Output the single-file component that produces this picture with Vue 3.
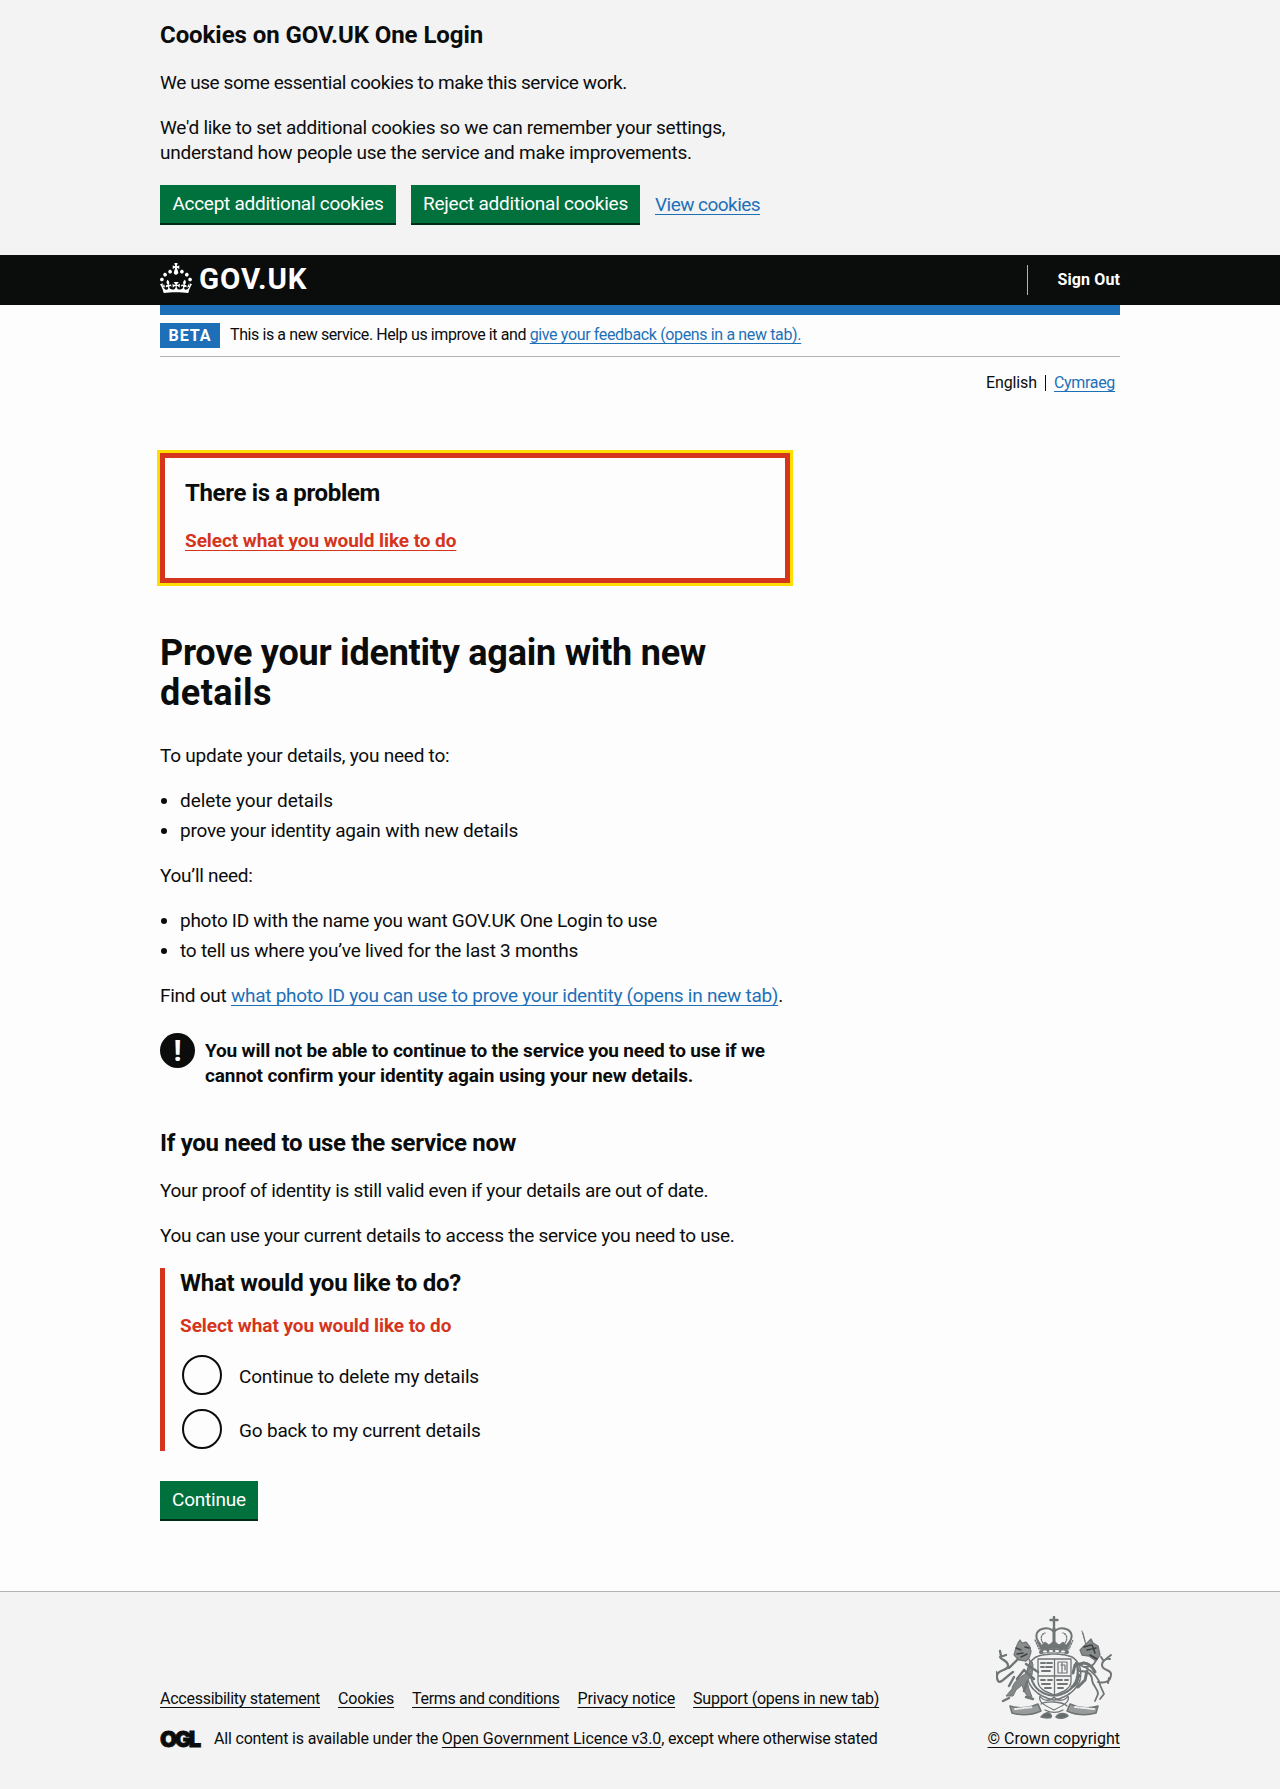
<script setup>
import { ref } from 'vue'

const choice = ref('')

const footerLinks = [
  { text: 'Accessibility statement', cls: 'k26' },
  { text: 'Cookies', cls: 'k20' },
  { text: 'Terms and conditions', cls: 'k33' },
  { text: 'Privacy notice', cls: 'k15' },
  { text: 'Support (opens in new tab)', cls: 'k23' }
]

const options = [
  { value: 'delete', text: 'Continue to delete my details' },
  { value: 'back', text: 'Go back to my current details' }
]
</script>

<template>
  <div class="page">
    <section class="cookies">
      <div class="container">
        <h2 class="heading-m k07">Cookies on GOV.UK One Login</h2>
        <p class="body k40">We use some essential cookies to make this service work.</p>
        <p class="body k27">We'd like to set additional cookies so we can remember your settings,<br>understand how people use the service and make improvements.</p>
        <div class="cookie-actions">
          <button class="button accept k27">Accept additional cookies</button>
          <button class="button reject k25">Reject additional cookies</button>
          <a class="link view k54" href="#">View cookies</a>
        </div>
      </div>
    </section>

    <header class="header">
      <div class="container header-row">
        <a class="brand" href="#">
          <svg class="crown" viewBox="0 0 32 30" width="32" height="30" fill="#fff" aria-hidden="true">
            <path d="M22.6 10.4c-1 .4-2-.1-2.4-1-.4-.9.1-2 1-2.4.9-.4 2 .1 2.4 1s-.1 2-1 2.4m4.9 3c-1 .4-2-.1-2.4-1-.4-.9.1-2 1-2.4.9-.4 2 .1 2.4 1s0 2-1 2.4m3.3 4.8c-1 .4-2-.1-2.4-1-.4-.9.1-2 1-2.4.9-.4 2 .1 2.4 1s-.1 2-1 2.4M17 4.7l2.3 1.2V2.5l-2.3.7-.2-.2.9-3h-3.4l.9 3-.2.2c-.1.1-2.3-.7-2.3-.7v3.4L15 4.7c.1.1.1.2.2.2l-1.3 4c-.1.2-.1.4-.1.6 0 1.1.8 2 1.9 2.2h.7c1-.2 1.9-1.1 1.9-2.1 0-.2 0-.4-.1-.6l-1.3-4c-.1-.2 0-.2.1-.3m-7.6 5.7c.9.4 2-.1 2.4-1 .4-.9-.1-2-1-2.4-.9-.4-2 .1-2.4 1s0 2 1 2.4m-5 3c.9.4 2-.1 2.4-1 .4-.9-.1-2-1-2.4-.9-.4-2 .1-2.4 1s.1 2 1 2.4m-3.2 4.8c.9.4 2-.1 2.4-1 .4-.9-.1-2-1-2.4-.9-.4-2 .1-2.4 1s0 2 1 2.4m14.8 11c4.4 0 8.6.3 12.3.8 1.1-4.5 2.4-7 3.7-8.8l-2.5-.9c.2 1.3.3 1.9 0 2.7-.4-.4-.8-1.1-1.1-2.3l-1.2 4c.7-.5 1.3-.8 2-.9-1.1 2.5-2.6 3.1-3.5 3-1.1-.2-1.7-1.2-1.5-2.1.3-1.2 1.5-1.5 2.1-.1 1.1-2.3-.8-3-2-2.3 1.9-1.9 2.1-3.5.6-5.6-2.1 1.6-2.1 3.2-1.2 5.5-1.2-1.4-3.2-.6-2.5 1.6.9-1.4 2.1-.5 1.9.8-.2 1.1-1.7 2.1-3.5 1.9-2.7-.2-2.9-2.1-2.9-3.6.7-.1 1.9.5 2.9 1.9l.4-4.3c-1.1 1.1-2.1 1.4-3.2 1.4.4-1.2 2.1-3 2.1-3h-5.4s1.7 1.9 2.1 3c-1.1 0-2.1-.2-3.2-1.4l.4 4.3c1-1.4 2.2-2 2.9-1.9-.1 1.5-.2 3.4-2.9 3.6-1.9.2-3.4-.8-3.5-1.9-.2-1.3 1-2.2 1.9-.8.7-2.3-1.2-3-2.5-1.6.9-2.2.9-3.9-1.2-5.5-1.5 2-1.3 3.7.6 5.6-1.2-.7-3.1 0-2 2.3.6-1.4 1.8-1.1 2.1.1.2.9-.3 1.9-1.5 2.1-.9.2-2.4-.5-3.5-3 .6 0 1.2.3 2 .9l-1.2-4c-.3 1.1-.7 1.9-1.1 2.3-.3-.8-.2-1.4 0-2.7L0 21.2C1.3 23 2.6 25.5 3.7 30c3.7-.5 7.9-.8 12.3-.8" />
          </svg>
          <span class="brand-name">GOV.UK</span>
        </a>
        <nav class="account"><a href="#">Sign Out</a></nav>
      </div>
    </header>

    <div class="container">
      <div class="accent"></div>
      <div class="phase">
        <strong class="tag">BETA</strong>
        <span class="k40">This is a new service. Help us improve it and <a class="link k36" href="#">give your feedback (opens in a new tab).</a></span>
      </div>
      <nav class="languages">
        <span class="current">English</span>
        <a class="link k33" href="#">Cymraeg</a>
      </nav>

      <main class="main">
        <section class="error-summary">
          <h2 class="heading-m k35">There is a problem</h2>
          <a class="error-link k07" href="#">Select what you would like to do</a>
        </section>

        <h1 class="heading-l"><span class="k24">Prove your identity again with new</span><br><span class="wide">details</span></h1>

        <p class="body k23">To update your details, you need to:</p>
        <ul class="list">
          <li class="k07">delete your details</li>
          <li class="k21">prove your identity again with new details</li>
        </ul>
        <p class="body k30">You’ll need:</p>
        <ul class="list">
          <li class="k28">photo ID with the name you want GOV.UK One Login to use</li>
          <li class="k23">to tell us where you’ve lived for the last 3 months</li>
        </ul>
        <p class="body k26">Find out <a class="link" href="#">what photo ID you can use to prove your identity (opens in new tab)</a>.</p>

        <div class="warning">
          <span class="warning-icon" aria-hidden="true">!</span>
          <strong><span class="k16">You will not be able to continue to the service you need to use if we</span><br><span class="k10">cannot confirm your identity again using your new details.</span></strong>
        </div>

        <h2 class="heading-m k31">If you need to use the service now</h2>
        <p class="body k30">Your proof of identity is still valid even if your details are out of date.</p>
        <p class="body k29">You can use your current details to access the service you need to use.</p>

        <form @submit.prevent>
          <fieldset class="group">
            <h2 class="legend k24">What would you like to do?</h2>
            <p class="error-message k07">Select what you would like to do</p>
            <label v-for="o in options" :key="o.value" class="option">
              <input v-model="choice" type="radio" name="choice" :value="o.value">
              <span class="k18">{{ o.text }}</span>
            </label>
          </fieldset>
          <button class="button continue k20">Continue</button>
        </form>
      </main>
    </div>

    <footer class="footer">
      <div class="container footer-row">
        <div>
          <ul class="footer-links">
            <li v-for="l in footerLinks" :key="l.text"><a :class="['footer-link', l.cls]" href="#">{{ l.text }}</a></li>
          </ul>
          <div class="licence">
            <span class="ogl">OGL</span>
            <span class="k19">All content is available under the <a class="footer-link k06" href="#">Open Government Licence v3.0</a><span class="k26">, except where otherwise stated</span></span>
          </div>
        </div>
        <div class="copyright">
          <svg class="crest" viewBox="0 0 116 103" width="116" height="103" fill="none" stroke="#6f7475" stroke-width="1.3" stroke-linecap="round" stroke-linejoin="round" aria-hidden="true">
            <!-- crown -->
            <path d="M58 1v9M54.500 4h7" stroke-width="2.400" />
            <path d="M44 28c-6-7-4-13 2-15 5-2 10 0 12 3 2-3 7-5 12-3 6 2 8 8 2 15" stroke-width="2" />
            <path d="M58 12v17" stroke-width="3" />
            <path d="M47 27c-3-4-2-9 2-10M69 27c3-4 2-9-2-10M39 24l4 9c10-3 20-3 30 0l4-9" stroke-dasharray="1.500 1.500" />
            <path d="M41 26l4 8c9-2 17-2 26 0l4-8-5 3-3-3-4 3-5-4-5 4-4-3-3 3z" fill="#6f7475" stroke-width=".8" />
            <path d="M45 36c9-2 17-2 26 0" stroke-width="4" />
            <path d="M48 35.500h2M54 35h2M60 35h2M66 35.500h2" stroke="#f3f3f3" stroke-width="2" />
            <!-- garter and quartered shield -->
            <path d="M40 41c-8 5-10 14-8 23 3 10 14 18 26 20 12-2 23-10 26-20 2-9 0-18-8-23-10-4-26-4-36 0z" stroke-dasharray="3 1.200" stroke-width="1.600" />
            <path d="M36 47c-4 8-1 22 8 28 9 6 19 6 28 0 9-6 12-20 8-28" stroke-dasharray="2 1.500" stroke-width="2.200" />
            <path d="M42 43h33v22c0 8-8 11-16.500 14C50 76 42 73 42 65zM58.500 43v35M42 60h33" />
            <path d="M45 47h4m2 0h5M45 51h3m2 0h6M46 55h8M45 64h4m3 0h4M46 68h8M49 72h6M61 64h5m3 0h3M62 68h9M62 72h5" stroke-width="1.900" />
            <path d="M62 46h9v11h-9zM65 49h4v5M66 47v9" stroke-width="1.200" />
            <!-- lion -->
            <path d="M22 27l2-3 2 3 4-1 4 5 1 5-2 6-3 3-7-1-5-5 2-7z" fill="#8b8f90" stroke-dasharray="2 1" />
            <path d="M20 32l5 2m-4 4l6-1m2-6l4 1M25 41l6-3" stroke="#3f4344" stroke-width="1.500" />
            <path d="M33 43c2 8 0 13-7 17-5 4-9 7-10 13l-6 7h7l3-6 6-5 2 6 4 6h4l-3-8-2-8 5-6 1-10z" fill="#85898a" stroke-width="1" />
            <path d="M30 48l12 8m-14-2l10 9M22 43l-9 9m5 9l-5 9m15-16l-7 9m10 3l-3 9M13 82l-6 3M30 81l7 2" stroke-width="2.400" />
            <path d="M17 56C8 62 3 71 1 62s13-7 11-13C11 44 5 44 4 41m0 0l6-2m-5 1l-1-5M1 62l-1-6" stroke-width="2.300" />
            <!-- unicorn -->
            <path d="M90 29L86 15M87 17l2 8" stroke-width="1" />
            <path d="M84 34l6-6 5-5 2 4 5 3 2 9-4 6-7-5-7-1z" fill="#858a8b" />
            <path d="M88 31l7-2m-4 5l9-2m-4-3l3 8m-5 2l7 4" stroke="#3d4142" stroke-width="1.600" />
            <path d="M100 44c-2 6-6 7-12 7l-8-4 3 8c7 0 13 2 13 9 1 7 6 8 6 14l-3 7M89 51c8 5 14 10 15 18l4 9-4 5" stroke-width="1.800" />
            <path d="M88 47l-9 2-2 8m6 2l-3 9-4 3M91 55l-2 9-7 7M87 47c5 0 9 3 12 9" stroke-width="3" />
            <path d="M102 66c9 2 13-2 13-8 0-5-9-3-9-9 0-4 4-7 8-6m-7 1l-2-3m5 2l5-4M112 67l1-5" stroke-width="2" />
            <!-- compartment and motto scroll -->
            <path d="M14 90c9 3 20 2 28-2l3 7c-9 4-19 5-29 2zM102 90c-9 3-20 2-28-2l-3 7c9 4 19 5 29 2z" fill="#999c9d" stroke-width="1.600" />
            <path d="M19 93l18-2M79 91l19 2" stroke="#ededed" stroke-dasharray="1 1.600" stroke-width="2" />
            <path d="M44 80c4 6 11 5 14 1 3 4 10 5 14-1 2 6-4 9-14 14-10-5-16-8-14-14zM45 88c5-3 21-3 26 2M49 94c6 3 13 3 18 0" />
            <path d="M45 101c3-4 8-6 10-2s-5 3-10 2zM60 101c3-5 10-4 12-1-3 2-8 3-12 1z" fill="#656a6b" stroke-width="1.500" />
          </svg>
          <a class="footer-link" href="#">© Crown copyright</a>
        </div>
      </div>
    </footer>
  </div>
</template>

<style>
body {
  margin: 0;
  background: #fdfdfd;
}
</style>

<style scoped>
.page {
  color: #0b0c0c;
  font: 400 19px/25px Roboto, "Noto Sans", sans-serif;
}
.page * { box-sizing: border-box; }
.container { width: 960px; margin: 0 auto; }
h1, h2, p, ul { margin: 0; padding: 0; }
ul { list-style: none; }
button { font: inherit; }

.k06 { letter-spacing: -0.058px; }
.k07 { letter-spacing: -0.067px; }
.k10 { letter-spacing: -0.098px; }
.k15 { letter-spacing: -0.15px; }
.k16 { letter-spacing: -0.159px; }
.k18 { letter-spacing: -0.178px; }
.k19 { letter-spacing: -0.183px; }
.k20 { letter-spacing: -0.2px; }
.k21 { letter-spacing: -0.211px; }
.k23 { letter-spacing: -0.232px; }
.k24 { letter-spacing: -0.24px; }
.k25 { letter-spacing: -0.25px; }
.k26 { letter-spacing: -0.26px; }
.k27 { letter-spacing: -0.268px; }
.k28 { letter-spacing: -0.281px; }
.k29 { letter-spacing: -0.289px; }
.k30 { letter-spacing: -0.298px; }
.k31 { letter-spacing: -0.313px; }
.k33 { letter-spacing: -0.328px; }
.k35 { letter-spacing: -0.35px; }
.k36 { letter-spacing: -0.357px; }
.k40 { letter-spacing: -0.405px; }
.k54 { letter-spacing: -0.544px; }
.wide { letter-spacing: 0.471px; }

.heading-l { font-size: 36px; line-height: 40px; font-weight: 700; margin-bottom: 30px; }
.heading-m { font-size: 24px; line-height: 30px; font-weight: 700; margin-bottom: 20px; }
.body { margin-bottom: 20px; }

.link {
  color: #1d70b8;
  text-decoration: underline;
  text-decoration-thickness: 1px;
  text-underline-offset: 3px;
  text-decoration-skip-ink: none;
}

.button {
  display: block;
  height: 38px;
  margin: 0;
  padding: 0 0 1px;
  border: 0;
  background: #00703c;
  box-shadow: 0 2px 0 #002d18;
  color: #fff;
  text-align: center;
  white-space: nowrap;
}

.cookies { height: 255px; padding-top: 20px; background: #f3f3f3; }
.cookie-actions { display: flex; align-items: center; gap: 15px; }
.accept { width: 236px; }
.reject { width: 229px; }

.header { height: 50px; background: #0b0c0c; }
.header-row { display: flex; justify-content: space-between; align-items: center; height: 50px; }
.brand { display: flex; align-items: center; gap: 7px; height: 46px; color: #fff; text-decoration: none; align-self: flex-start; }
.brand-name { font-size: 29.5px; line-height: 30px; font-weight: 700; letter-spacing: 0.9px; padding-top: 2px; }
.account { height: 30px; padding-left: 30px; border-left: 1px solid #b1b4b6; line-height: 28px; }
.account a { color: #fff; font-size: 16px; font-weight: 700; letter-spacing: 0.115px; text-decoration: none; }

.accent { height: 10px; background: #1d70b8; }
.phase { display: flex; align-items: center; gap: 10px; height: 42px; padding-bottom: 1px; border-bottom: 1px solid #b1b4b6; font-size: 16px; line-height: 20px; }
.tag { width: 60px; height: 25px; background: #1d70b8; color: #fff; line-height: 25px; letter-spacing: 0.95px; text-align: center; }
.languages { display: flex; justify-content: flex-end; padding: 15px 5px 0 0; height: 46px; font-size: 16px; line-height: 22px; }
.current { height: 16px; margin: 3px 8px 0 0; padding-right: 8px; border-right: 1px solid #0b0c0c; line-height: 16px; letter-spacing: -0.1px; }

.main { width: 630px; padding-top: 50px; }
.error-summary { height: 130px; margin-bottom: 50px; padding: 20px; border: 5px solid #d4351c; outline: 3px solid #fd0; }
.error-link {
  display: inline-block;
  color: #d4351c;
  font-weight: 700;
  text-decoration: underline;
  text-decoration-thickness: 1px;
  text-underline-offset: 3px;
  text-decoration-skip-ink: none;
}
.list { margin-bottom: 20px; }
.list li { display: flex; align-items: center; margin-bottom: 5px; white-space: nowrap; }
.list li::before { content: ""; width: 6px; height: 6px; margin: 1px 13px 0 1px; border-radius: 50%; background: #0b0c0c; }

.warning { display: flex; gap: 10px; margin: 25px 0 40px; }
.warning strong { padding-top: 5px; white-space: nowrap; }
.warning-icon { width: 35px; height: 35px; border-radius: 50%; background: #0b0c0c; color: #fff; font-size: 30px; line-height: 36px; font-weight: 700; text-align: center; }

.group { height: 183px; margin: 0 0 30px; padding: 0 0 0 15px; border: 0; border-left: 5px solid #d4351c; min-width: 0; }
.legend { font-size: 24px; line-height: 30px; margin-bottom: 15px; }
.error-message { margin-bottom: 17px; color: #d4351c; font-weight: 700; }
.option { display: flex; align-items: center; height: 40px; margin: 0 0 14px 2px; gap: 17px; }
.option span { padding-top: 2px; }
.option input { appearance: none; width: 40px; height: 40px; margin: 0; border: 2px solid #0b0c0c; border-radius: 50%; }
.continue { width: 98px; }

.footer { height: 198px; margin-top: 72px; border-top: 1px solid #b1b4b6; background: #f3f3f3; font-size: 16px; line-height: 20px; }
.footer-row { display: flex; justify-content: space-between; align-items: flex-start; }
.footer-link {
  color: #0b0c0c;
  text-decoration: underline;
  text-decoration-thickness: 1px;
  text-underline-offset: 3px;
  text-decoration-skip-ink: none;
}
.footer-links { display: flex; gap: 18px; padding-top: 97px; margin-bottom: 20px; }
.licence { display: flex; align-items: center; }
.ogl { width: 54px; font-family: Inter, sans-serif; font-size: 22px; line-height: 20px; font-weight: 900; letter-spacing: -2.4px; -webkit-text-stroke: 0.8px #0b0c0c; }
.copyright { display: flex; flex-direction: column; align-items: flex-end; padding-top: 24px; }
.crest { margin: 0 8px 10px 0; }
</style>
